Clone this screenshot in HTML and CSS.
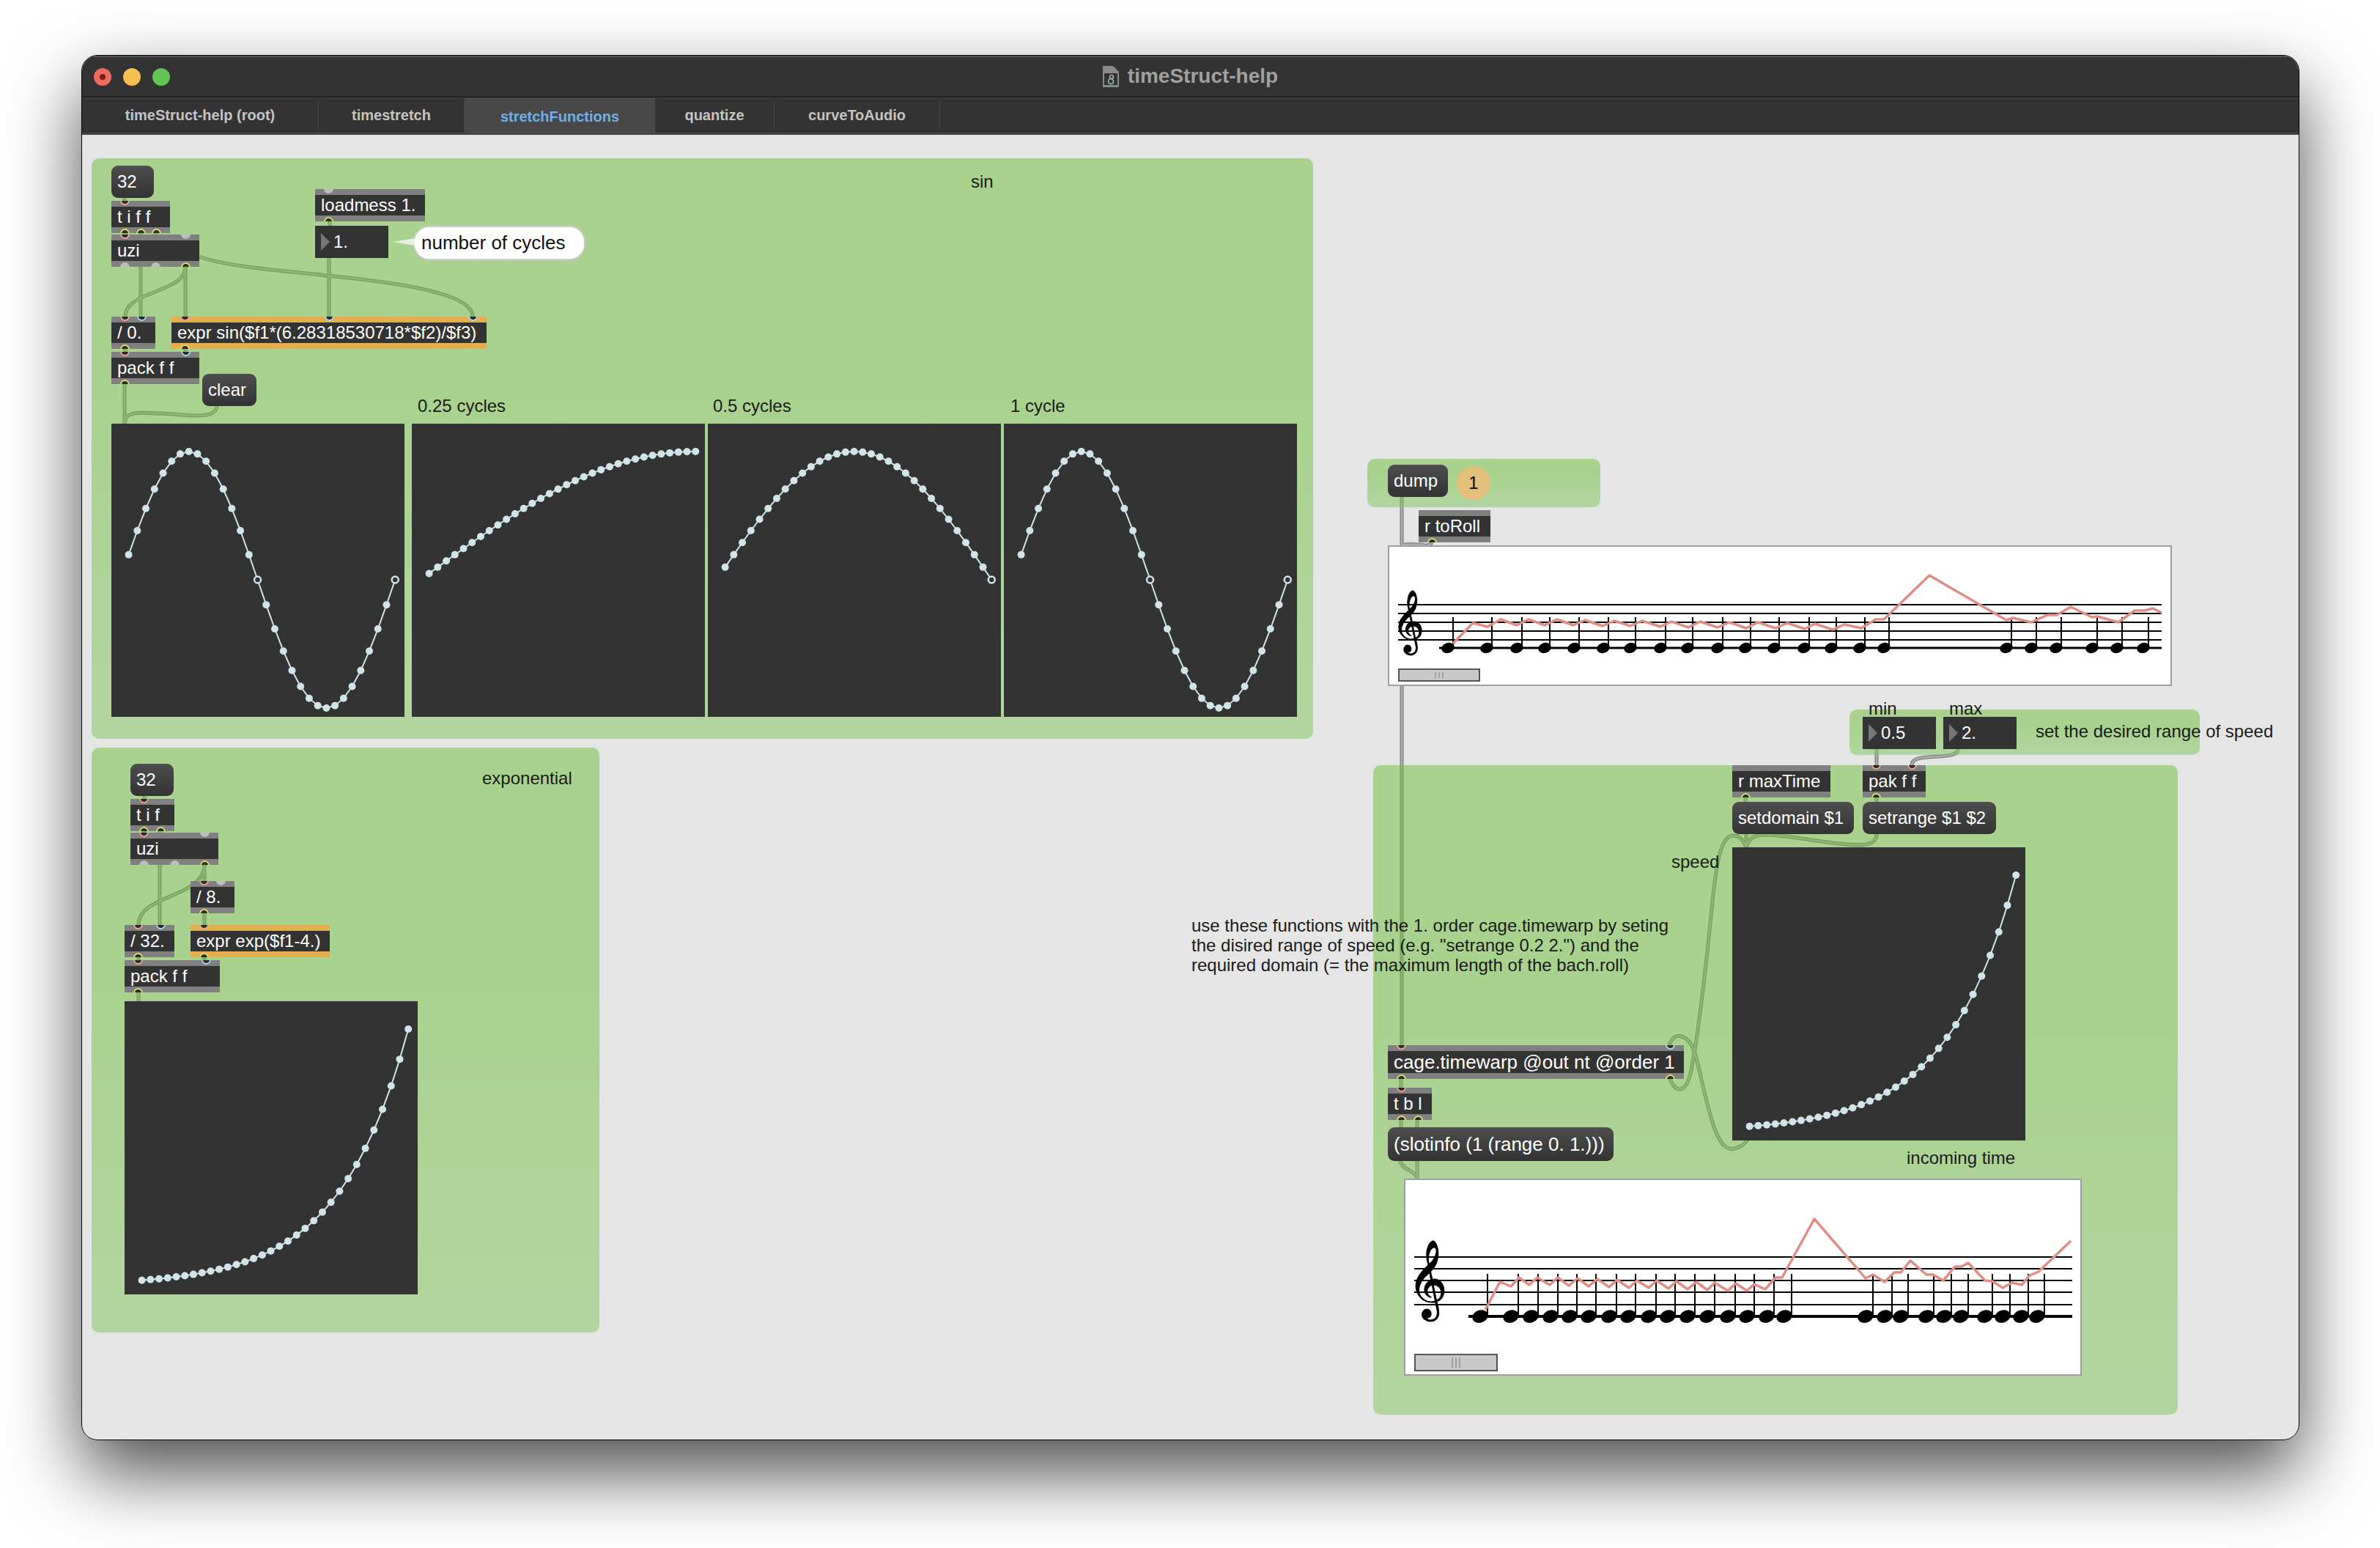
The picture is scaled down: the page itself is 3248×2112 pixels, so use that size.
FILE: index.html
```html
<!DOCTYPE html>
<html lang="en">
<head>
    <meta charset="UTF-8">
    <title>timeStruct-help</title>
    <link rel="stylesheet" href="styles.css">
</head>
<body>
<div class="window">
    <header class="titlebar">
        <div class="lights"><i class="light red"></i><i class="light yellow"></i><i class="light green"></i></div>
        <div class="title">
            <svg class="doc-icon" viewBox="0 0 22 29">
                <path d="M0 0H14L22 8V29H0Z" fill="#8a8a8a"/>
                <rect x="2" y="10" width="18" height="16" fill="#333"/>
                <circle cx="11" cy="21" r="3.5" fill="none" stroke="#9fc4c4" stroke-width="1.5"/>
                <circle cx="12" cy="15" r="2.5" fill="none" stroke="#aaa" stroke-width="1.5"/>
            </svg>
            <span>timeStruct-help</span>
        </div>
    </header>

    <nav class="tabs">
        <div class="tab">timeStruct-help (root)</div>
        <div class="tab">timestretch</div>
        <div class="tab active">stretchFunctions</div>
        <div class="tab">quantize</div>
        <div class="tab">curveToAudio</div>
    </nav>

    <main class="canvas">
        <!-- patch cords sit under the translucent panels -->
        <svg class="wires" viewBox="112 184 3024 1779">
            <defs>
                <g id="cords">
                    <path d="M170 270V274M171 318V320M192 318V320M213 318V320"/>
                    <path d="M192 364V432M253 364V432"/>
                    <path d="M253 364C253 400 171 396 171 432"/>
                    <path d="M272 350C340 378 645 375 645 432"/>
                    <path d="M450 302V308M449 352V432"/>
                    <path d="M171 476V480M253 476V480M170 524V578"/>
                    <path d="M296 553C296 575 250 565 220 564S170 560 170 578"/>

                    <path d="M197 1086V1090M197 1134V1136M218 1134V1136"/>
                    <path d="M218 1180V1262M279 1180V1202M279 1246V1262"/>
                    <path d="M279 1180C279 1225 189 1220 189 1262"/>
                    <path d="M189 1306V1310M279 1306V1310M189 1354V1366"/>

                    <path d="M1913 678V1426"/>
                    <path d="M1954 740C1950 750 1930 738 1913 744"/>
                    <path d="M2382 1088V1094M2561 1088V1094"/>
                    <path d="M2561 1022V1044"/>
                    <path d="M2672 1022C2672 1040 2609 1024 2609 1044"/>
                    <path d="M2561 1138C2561 1158 2530 1153 2500 1150C2460 1145 2430 1138 2405 1139C2390 1140 2385 1148 2383 1156"/>
                    <path d="M2383 1138V1156"/>
                    <path d="M2278 1426C2285 1405 2305 1410 2314 1440C2330 1500 2340 1580 2370 1566C2378 1564 2383 1558 2386 1554"/>
                    <path d="M2278 1470C2288 1495 2302 1490 2308 1460C2320 1400 2330 1300 2336 1240C2342 1180 2348 1140 2365 1140C2375 1140 2380 1148 2383 1156"/>
                    <path d="M1912 1472V1484M1912 1528V1538M1934 1528V1538"/>
                    <path d="M1911 1584C1913 1596 1934 1598 1934 1608M1934 1584V1608"/>
                </g>
            </defs>
            <use href="#cords" class="cord-edge"/>
            <use href="#cords" class="cord-core"/>
        </svg>

        <section class="panel p-sin"></section>
        <section class="panel p-exp"></section>
        <section class="panel p-dump"></section>
        <section class="panel p-range"></section>
        <section class="panel p-warp"></section>

        <!-- sin -->
        <div class="msg n-count-a">32</div>
        <div class="obj n-tiff">
            <div class="ports in"><i class="hot"></i></div>t i f f
            <div class="ports out"><i></i><i></i><i></i></div>
        </div>
        <div class="obj n-uzi-a">
            <div class="ports in"><i class="hot"></i><i class="idle"></i></div>uzi
            <div class="ports out"><i class="idle"></i><i class="idle"></i><i></i></div>
        </div>
        <div class="obj n-loadmess">
            <div class="ports in"><i class="idle"></i></div>loadmess 1.
            <div class="ports out"><i></i></div>
        </div>
        <div class="num n-cycles">1.</div>
        <div class="bubble n-bubble">number of cycles</div>
        <div class="obj n-div0">
            <div class="ports in"><i class="hot"></i><i class="cold"></i></div>/ 0.
            <div class="ports out"><i></i></div>
        </div>
        <div class="obj expr n-expr-sin">
            <div class="ports in"><i class="hot"></i><i class="cold"></i><i class="cold"></i></div>expr sin($f1*(6.28318530718*$f2)/$f3)
            <div class="ports out"><i></i></div>
        </div>
        <div class="obj n-pack-a">
            <div class="ports in"><i class="hot"></i><i class="cold"></i></div>pack f f
            <div class="ports out"><i></i></div>
        </div>
        <div class="msg n-clear">clear</div>
        <div class="note n-sin">sin</div>
        <div class="note n-c25">0.25 cycles</div>
        <div class="note n-c50">0.5 cycles</div>
        <div class="note n-c100">1 cycle</div>
        <svg class="plot n-plot1" viewBox="0 0 400 400" data-cycles="1"></svg>
        <svg class="plot n-plot2" viewBox="0 0 400 400" data-cycles="0.25"></svg>
        <svg class="plot n-plot3" viewBox="0 0 400 400" data-cycles="0.5"></svg>
        <svg class="plot n-plot4" viewBox="0 0 400 400" data-cycles="1"></svg>

        <!-- exponential -->
        <div class="msg n-count-b">32</div>
        <div class="obj n-tif">
            <div class="ports in"><i class="hot"></i></div>t i f
            <div class="ports out"><i></i><i></i></div>
        </div>
        <div class="obj n-uzi-b">
            <div class="ports in"><i class="hot"></i><i class="idle"></i></div>uzi
            <div class="ports out"><i class="idle"></i><i class="idle"></i><i></i></div>
        </div>
        <div class="obj n-div8">
            <div class="ports in"><i class="hot"></i><i class="idle"></i></div>/ 8.
            <div class="ports out"><i></i></div>
        </div>
        <div class="obj n-div32">
            <div class="ports in"><i class="hot"></i><i class="cold"></i></div>/ 32.
            <div class="ports out"><i></i></div>
        </div>
        <div class="obj expr n-expr-exp">
            <div class="ports in"><i class="hot"></i></div>expr exp($f1-4.)
            <div class="ports out"><i></i></div>
        </div>
        <div class="obj n-pack-b">
            <div class="ports in"><i class="hot"></i><i class="cold"></i></div>pack f f
            <div class="ports out"><i></i></div>
        </div>
        <div class="note n-exp">exponential</div>
        <svg class="plot n-plot5" viewBox="0 0 400 400" data-curve="exp"></svg>

        <!-- dump and first roll -->
        <div class="msg n-dump">dump</div>
        <div class="badge n-badge">1</div>
        <div class="obj n-toroll">r toRoll
            <div class="ports out"><i></i></div>
        </div>
        <svg class="roll n-roll1" id="rollIn" viewBox="1896 746 1066 188"></svg>

        <!-- range -->
        <div class="note n-min">min</div>
        <div class="note n-max">max</div>
        <div class="num n-lo">0.5</div>
        <div class="num n-hi">2.</div>
        <div class="note n-range">set the desired range of speed</div>

        <!-- timewarp -->
        <div class="obj n-maxtime">r maxTime
            <div class="ports out"><i></i></div>
        </div>
        <div class="obj n-pak">
            <div class="ports in"><i class="hot"></i><i class="hot"></i></div>pak f f
            <div class="ports out"><i></i></div>
        </div>
        <div class="msg n-setdomain">setdomain $1</div>
        <div class="msg n-setrange">setrange $1 $2</div>
        <div class="note n-speed">speed</div>
        <svg class="plot n-plot6" viewBox="0 0 400 400" data-curve="exp"></svg>
        <div class="note n-incoming">incoming time</div>
        <div class="note n-usage">use these functions with the 1. order cage.timewarp by seting<br>the disired range of speed (e.g. "setrange 0.2 2.") and the<br>required domain (= the maximum length of the bach.roll)</div>
        <div class="obj n-warp">
            <div class="ports in"><i class="hot"></i><i class="cold"></i></div>cage.timewarp @out nt @order 1
            <div class="ports out"><i></i><i></i></div>
        </div>
        <div class="obj n-tbl">
            <div class="ports in"><i class="hot"></i></div>t b l
            <div class="ports out"><i></i><i></i></div>
        </div>
        <div class="msg n-slotinfo">(slotinfo (1 (range 0. 1.)))</div>
        <svg class="roll n-roll2" id="rollOut" viewBox="1918 1610 921 265"></svg>
    </main>
</div>
<script src="script.js"></script>
</body>
</html>
```

FILE: styles.css
```css
* {
    box-sizing: border-box;
}

body {
    margin: 0;
    background: #fff;
    font-family: "Liberation Sans", Arial, sans-serif;
    overflow: hidden;
}

.window {
    position: relative;
    display: flex;
    flex-direction: column;
    width: 3027px;
    height: 1890px;
    margin: 75px 0 0 111px;
    border: 1px solid #000;
    border-radius: 22px;
    overflow: hidden;
    background: #e5e5e5;
}

body::before {
    content: "";
    position: absolute;
    left: 111px;
    top: 75px;
    width: 3027px;
    height: 1890px;
    border-radius: 22px;
    box-shadow: 0 44px 100px rgba(0, 0, 0, 0.7);
}

/* Title bar */
.titlebar {
    position: relative;
    flex: none;
    height: 57px;
    background: #333;
    border-top: 2px solid #555;
    border-bottom: 1px solid #000;
}

.lights {
    position: absolute;
    left: 16px;
    top: 15px;
    display: flex;
    gap: 16px;
}

.light {
    position: relative;
    width: 24px;
    height: 24px;
    border-radius: 50%;
}

.light.red { background: #ed6a5e; }
.light.yellow { background: #f5bf4f; }
.light.green { background: #62c554; }

.light.red::after {
    content: "";
    position: absolute;
    left: 8px;
    top: 8px;
    width: 8px;
    height: 8px;
    border-radius: 50%;
    background: #7c1d14;
}

.title {
    display: flex;
    align-items: center;
    justify-content: center;
    gap: 12px;
    height: 52px;
    color: #a0a0a0;
    font-size: 28px;
    font-weight: bold;
}

.doc-icon {
    width: 22px;
    height: 29px;
}

/* Tabs */
.tabs {
    display: grid;
    flex: none;
    grid-template-columns: 323px 199px 260px 163px 226px;
    height: 51px;
    background: #333;
    border-top: 1px solid #555;
    border-bottom: 3px solid #484848;
}

.tab {
    display: flex;
    align-items: center;
    justify-content: center;
    margin: 4px 0;
    border-right: 1px solid #484848;
    color: #c4c4c4;
    font-size: 20px;
    font-weight: bold;
}

.tab.active {
    margin: 0 0 -3px;
    border-right: 0;
    background: #484848;
    color: #6db0ec;
}

/* Patcher canvas: everything below is placed freely, like a Max patch */
.canvas {
    position: relative;
    flex: 1;
    font-size: 24px;
}

.wires {
    position: absolute;
    left: 0;
    top: 0;
    width: 3024px;
    height: 1779px;
}

.wires use {
    fill: none;
}

.cord-edge {
    stroke: #7d7d7d;
    stroke-width: 5;
}

.cord-core {
    stroke: #adadad;
    stroke-width: 2.5;
}

.panel {
    position: absolute;
    border-radius: 10px;
    background: linear-gradient(rgba(109, 191, 57, 0.5) 40%, rgba(129, 197, 91, 0.5));
}

.obj,
.msg,
.num,
.badge,
.bubble,
.note,
.plot,
.roll {
    position: absolute;
}

.obj,
.msg,
.num {
    display: flex;
    align-items: center;
    height: 44px;
    color: #fff;
    white-space: nowrap;
}

.obj {
    --bar: #808080;
    padding-left: 8px;
    overflow: hidden;
    background: linear-gradient(var(--bar) 8px, #333 8px, #333 calc(100% - 8px), var(--bar) calc(100% - 8px));
}

.obj.expr {
    --bar: #e4ae4e;
}

.ports {
    position: absolute;
    left: 0;
    right: 0;
    display: flex;
    justify-content: space-between;
    padding: 0 12px;
}

.ports.in { top: -7px; }
.ports.out { bottom: -7px; }

.ports i {
    width: 13px;
    height: 13px;
    border: 2px solid #dfdc6c;
    border-radius: 50%;
    background: #2b2b2b;
}

.ports i.hot { border-color: #eba394; }
.ports i.cold { border-color: #a6d8ea; }

.ports i.idle {
    border-color: #bdbdbd;
    background: #bdbdbd;
}

.msg {
    padding-left: 8px;
    border-radius: 9px;
    background: linear-gradient(#4e4e4e, #333);
}

.num {
    padding-left: 25px;
    background: #333;
}

.num::before {
    content: "";
    position: absolute;
    left: 8px;
    top: 10px;
    border-left: 12px solid #777;
    border-top: 12px solid transparent;
    border-bottom: 12px solid transparent;
}

.badge {
    display: flex;
    align-items: center;
    justify-content: center;
    width: 46px;
    height: 46px;
    border-radius: 50%;
    background: #e3bf7c;
    color: #000;
}

.bubble {
    display: flex;
    align-items: center;
    width: 235px;
    height: 47px;
    padding-left: 9px;
    border: 2px solid #ccc;
    border-radius: 22px;
    background: #fff;
    color: #111;
    font-size: 26px;
}

.bubble::before {
    content: "";
    position: absolute;
    left: -30px;
    top: 15px;
    border-right: 30px solid #e8efe4;
    border-top: 5px solid transparent;
    border-bottom: 5px solid transparent;
}

.note {
    color: #1a1a1a;
    line-height: 28px;
    white-space: nowrap;
}

.plot {
    width: 400px;
    height: 400px;
    background: #333;
}

.plot polyline {
    fill: none;
    stroke: #d0e4ea;
    stroke-width: 2;
}

.plot circle {
    fill: #d0e4ea;
}

.plot circle.zero {
    fill: #333;
    stroke: #d0e4ea;
    stroke-width: 2.5;
}

.roll {
    border: 2px solid #a0a0a0;
    background: #fff;
}

.staff {
    stroke: #000;
    stroke-width: 2;
}

.ledger {
    stroke: #000;
    stroke-width: 3;
}

.n-roll2 .ledger {
    stroke-width: 4;
}

.stem {
    stroke: #000;
    stroke-width: 2;
}

.curve {
    fill: none;
    stroke: #e08e85;
    stroke-width: 3.5;
    stroke-linejoin: round;
}

.clef {
    fill: #000;
    stroke: #000;
    stroke-width: 1;
    font-family: "DejaVu Sans", sans-serif;
}

.slider {
    fill: #c8c8c8;
    stroke: #555;
    stroke-width: 2;
}

.grip {
    stroke: #777;
    stroke-width: 1;
}

/* Panels */
.p-sin { left: 13px; top: 32px; width: 1667px; height: 792px; }
.p-exp { left: 13px; top: 836px; width: 693px; height: 798px; }
.p-dump { left: 1754px; top: 442px; width: 318px; height: 66px; }
.p-range { left: 2412px; top: 784px; width: 478px; height: 62px; }
.p-warp { left: 1762px; top: 860px; width: 1098px; height: 886px; }

/* sin */
.n-count-a { left: 40px; top: 42px; width: 58px; }
.n-tiff { left: 40px; top: 90px; width: 80px; }
.n-uzi-a { left: 40px; top: 136px; width: 120px; }
.n-loadmess { left: 318px; top: 74px; width: 150px; }
.n-cycles { left: 318px; top: 124px; width: 100px; }
.n-bubble { left: 452px; top: 124px; }
.n-div0 { left: 40px; top: 248px; width: 60px; }
.n-expr-sin { left: 122px; top: 248px; width: 430px; }
.n-pack-a { left: 40px; top: 296px; width: 120px; }
.n-clear { left: 164px; top: 326px; width: 74px; }
.n-sin { left: 1213px; top: 50px; }
.n-c25 { left: 458px; top: 356px; }
.n-c50 { left: 861px; top: 356px; }
.n-c100 { left: 1267px; top: 356px; }
.n-plot1 { left: 40px; top: 394px; }
.n-plot2 { left: 450px; top: 394px; }
.n-plot3 { left: 854px; top: 394px; }
.n-plot4 { left: 1258px; top: 394px; }

/* exponential */
.n-count-b { left: 66px; top: 858px; width: 59px; }
.n-tif { left: 66px; top: 906px; width: 60px; }
.n-uzi-b { left: 66px; top: 952px; width: 120px; }
.n-div8 { left: 148px; top: 1018px; width: 60px; }
.n-div32 { left: 58px; top: 1078px; width: 68px; }
.n-expr-exp { left: 148px; top: 1078px; width: 190px; }
.n-pack-b { left: 58px; top: 1126px; width: 130px; }
.n-exp { left: 546px; top: 864px; }
.n-plot5 { left: 58px; top: 1182px; }

/* dump and rolls */
.n-dump { left: 1782px; top: 450px; width: 82px; }
.n-badge { left: 1876px; top: 452px; }
.n-toroll { left: 1824px; top: 512px; width: 98px; }
.n-roll1 { left: 1782px; top: 560px; width: 1070px; height: 192px; }
.n-roll2 { left: 1804px; top: 1424px; width: 925px; height: 269px; }

/* range */
.n-min { left: 2438px; top: 769px; }
.n-max { left: 2548px; top: 769px; }
.n-lo { left: 2430px; top: 794px; width: 100px; }
.n-hi { left: 2540px; top: 794px; width: 100px; }
.n-range { left: 2666px; top: 800px; }

/* timewarp */
.n-maxtime { left: 2252px; top: 860px; width: 134px; }
.n-pak { left: 2430px; top: 860px; width: 86px; }
.n-setdomain { left: 2252px; top: 910px; width: 166px; }
.n-setrange { left: 2430px; top: 910px; width: 182px; }
.n-speed { left: 2169px; top: 978px; }
.n-plot6 { left: 2252px; top: 972px; }
.n-incoming { left: 2490px; top: 1382px; }
.n-usage { left: 1514px; top: 1065px; line-height: 27px; }
.n-warp { left: 1782px; top: 1242px; width: 404px; height: 46px; font-size: 26px; }
.n-tbl { left: 1782px; top: 1300px; width: 60px; }
.n-slotinfo { left: 1782px; top: 1354px; width: 308px; height: 46px; font-size: 26px; }
```

FILE: script.js
```js
const SVG_NS = 'http://www.w3.org/2000/svg';

function add(parent, tag, attrs, className) {
    const el = document.createElementNS(SVG_NS, tag);
    for (const key in attrs) el.setAttribute(key, attrs[key]);
    if (className) el.setAttribute('class', className);
    parent.appendChild(el);
    return el;
}

// Function plots: 32 points, same scaling as the patch
document.querySelectorAll('.plot').forEach(function(svg) {
    const cycles = parseFloat(svg.dataset.cycles);
    const points = [];
    for (let i = 1; i <= 32; i++) {
        const value = svg.dataset.curve === 'exp'
            ? Math.exp(i / 8 - 4)
            : (Math.sin(2 * Math.PI * cycles * i / 32) + 1) / 2;
        points.push({ x: 11.87 + 11.73 * i, y: 388 - 350 * value, value: value });
    }
    add(svg, 'polyline', { points: points.map(p => p.x + ',' + p.y).join(' ') });
    points.forEach(function(p) {
        const isZero = !svg.dataset.curve && Math.abs(p.value - 0.5) < 1e-9;
        add(svg, 'circle', { cx: p.x, cy: p.y, r: isZero ? 4.5 : 5 }, isZero ? 'zero' : '');
    });
});

// Piano rolls, measured against the page
function drawRoll(svg, roll) {
    roll.staff.forEach(function(y) {
        add(svg, 'line', { x1: roll.left, x2: roll.right, y1: y, y2: y }, 'staff');
    });
    add(svg, 'line', { x1: roll.ledgerLeft, x2: roll.right, y1: roll.noteY, y2: roll.noteY }, 'ledger');

    const clef = add(svg, 'text', { x: roll.clef[0], y: roll.clef[1], 'font-size': roll.clef[2] }, 'clef');
    clef.textContent = '\u{1D11E}';

    roll.notes.forEach(function(x) {
        add(svg, 'ellipse', {
            cx: x, cy: roll.noteY, rx: roll.head[0], ry: roll.head[1],
            transform: 'rotate(-20 ' + x + ' ' + roll.noteY + ')'
        });
        const stemX = x + roll.stemOffset;
        add(svg, 'line', { x1: stemX, x2: stemX, y1: roll.stemTop, y2: roll.noteY }, 'stem');
    });

    add(svg, 'polyline', { points: roll.curve.join(' ') }, 'curve');

    const s = roll.slider;
    add(svg, 'rect', { x: s[0], y: s[1], width: s[2], height: s[3] }, 'slider');
    [-5, 0, 5].forEach(function(dx) {
        const x = s[0] + s[2] / 2 + dx;
        add(svg, 'line', { x1: x, x2: x, y1: s[1] + 4, y2: s[1] + s[3] - 4 }, 'grip');
    });
}

drawRoll(document.getElementById('rollIn'), {
    left: 1908, right: 2950, ledgerLeft: 1964,
    staff: [825, 837, 849, 861, 873],
    noteY: 884, stemTop: 842, stemOffset: 7, head: [9, 7],
    clef: [1900, 872, 74],
    slider: [1909, 913, 110, 16],
    notes: [1976, 2029, 2070, 2108, 2148, 2188, 2225, 2266, 2303, 2344, 2382, 2421, 2462, 2499, 2538, 2571,
        2738, 2772, 2806, 2855, 2889, 2925],
    curve: [[1983, 878], [2010, 850], [2030, 855], [2048, 845], [2070, 853], [2086, 845], [2108, 853], [2125, 845],
        [2147, 853], [2163, 846], [2187, 854], [2203, 847], [2225, 854], [2241, 847], [2266, 855], [2281, 848],
        [2304, 856], [2320, 848], [2344, 856], [2360, 849], [2383, 857], [2399, 849], [2423, 857], [2439, 850],
        [2463, 858], [2477, 851], [2501, 859], [2517, 852], [2540, 857], [2560, 845], [2571, 845], [2633, 785],
        [2738, 846], [2747, 843], [2772, 849], [2794, 839], [2807, 839], [2826, 828], [2855, 842], [2862, 841],
        [2891, 849], [2913, 833], [2927, 833], [2938, 830], [2950, 836]]
});

drawRoll(document.getElementById('rollOut'), {
    left: 1930, right: 2828, ledgerLeft: 2004,
    staff: [1715, 1731, 1747, 1763, 1780],
    noteY: 1796, stemTop: 1738, stemOffset: 10, head: [11, 8.5],
    clef: [1921, 1776, 92],
    slider: [1931, 1848, 112, 22],
    notes: [2020, 2062, 2089, 2116, 2142, 2168, 2196, 2222, 2250, 2276, 2303, 2330, 2358, 2384, 2411, 2435,
        2546, 2572, 2594, 2629, 2653, 2676, 2709, 2733, 2758, 2780],
    curve: [[2027, 1787], [2047, 1749], [2062, 1755], [2073, 1743], [2087, 1753], [2098, 1743], [2115, 1753],
        [2126, 1743], [2141, 1754], [2153, 1744], [2168, 1755], [2180, 1745], [2196, 1756], [2207, 1746],
        [2223, 1757], [2234, 1747], [2250, 1757], [2261, 1747], [2277, 1758], [2288, 1748], [2303, 1759],
        [2315, 1749], [2330, 1760], [2340, 1750], [2358, 1761], [2369, 1751], [2384, 1761], [2394, 1752],
        [2409, 1759], [2423, 1743], [2432, 1743], [2476, 1663], [2546, 1744], [2556, 1739], [2572, 1749],
        [2585, 1736], [2594, 1736], [2607, 1720], [2629, 1739], [2638, 1739], [2652, 1747], [2668, 1728],
        [2677, 1728], [2686, 1723], [2709, 1747], [2719, 1748], [2733, 1757], [2746, 1750], [2759, 1753],
        [2770, 1740], [2782, 1735], [2826, 1693]]
});
```
